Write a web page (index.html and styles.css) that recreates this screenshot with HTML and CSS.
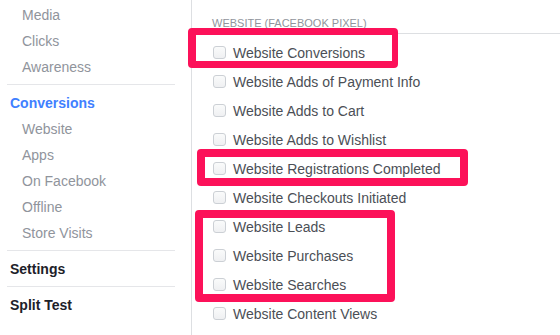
FILE: index.html
```html
<!DOCTYPE html>
<html>
<head>
<meta charset="utf-8">
<link rel="stylesheet" href="styles.css">
</head>
<body>
<div class="page">
  <aside class="sidebar">
    <div class="group">
      <div class="item sub">Media</div>
      <div class="item sub">Clicks</div>
      <div class="item sub">Awareness</div>
    </div>
    <div class="divider"></div>
    <div class="group">
      <div class="item head active">Conversions</div>
      <div class="item sub">Website</div>
      <div class="item sub">Apps</div>
      <div class="item sub">On Facebook</div>
      <div class="item sub">Offline</div>
      <div class="item sub">Store Visits</div>
    </div>
    <div class="divider"></div>
    <div class="item head">Settings</div>
    <div class="divider"></div>
    <div class="item head">Split Test</div>
  </aside>
  <main class="panel">
    <div class="section-title">WEBSITE (FACEBOOK PIXEL)</div>
    <ul class="list">
      <li class="row"><span class="check"></span>Website Conversions</li>
      <li class="row"><span class="check"></span>Website Adds of Payment Info</li>
      <li class="row"><span class="check"></span>Website Adds to Cart</li>
      <li class="row"><span class="check"></span>Website Adds to Wishlist</li>
      <li class="row"><span class="check"></span>Website Registrations Completed</li>
      <li class="row"><span class="check"></span>Website Checkouts Initiated</li>
      <li class="row"><span class="check"></span>Website Leads</li>
      <li class="row"><span class="check"></span>Website Purchases</li>
      <li class="row"><span class="check"></span>Website Searches</li>
      <li class="row"><span class="check"></span>Website Content Views</li>
    </ul>
  </main>
  <div class="mark mark-1"></div>
  <div class="mark mark-2"></div>
  <div class="mark mark-3"></div>
</div>
</body>
</html>
```

FILE: styles.css
```css
html, body {
  margin: 0;
  padding: 0;
  background: #ffffff;
}
body {
  font-family: "Liberation Sans", Arial, sans-serif;
  font-size: 14px;
  width: 560px;
  height: 335px;
  overflow: hidden;
}
.page {
  position: relative;
  display: flex;
  height: 335px;
}
.sidebar {
  width: 191px;
  flex: none;
  border-right: 1px solid #dddfe2;
  padding-top: 2px;
  box-sizing: content-box;
}
.item {
  height: 26px;
  line-height: 26px;
  white-space: nowrap;
}
.item.sub {
  padding-left: 22px;
  color: #90949c;
}
.item.head {
  padding-left: 10px;
  font-weight: bold;
  color: #1d2129;
}
.item.head.active {
  color: #4080ff;
}
.divider {
  height: 1px;
  background: #e5e6e9;
  margin: 4px 16px 5px 7px;
}
.panel {
  flex: 1;
  min-width: 0;
}
.section-title {
  font-size: 11px;
  line-height: 14px;
  color: #90949c;
  padding: 16px 0 3px 20px;
  margin-left: 8px;
  padding-left: 12px;
  border-bottom: 1px solid #dddfe2;
}
.list {
  list-style: none;
  margin: 0;
  padding: 4px 0 0 21px;
}
.row {
  height: 29px;
  display: flex;
  align-items: center;
  color: #4b4f56;
  white-space: nowrap;
}
.check {
  width: 11px;
  height: 11px;
  border: 1px solid #ccd0d5;
  border-radius: 3px;
  background: linear-gradient(#fafbfb, #eff0f2);
  margin-right: 7px;
  flex: none;
}
.mark {
  position: absolute;
  border: 8px solid #fc1159;
  border-radius: 4px;
  box-sizing: border-box;
}
.mark-1 {
  left: 188px;
  top: 28px;
  width: 210px;
  height: 40px;
  border-width: 7px 6px 7px 8px;
}
.mark-2 {
  left: 197px;
  top: 149px;
  width: 271px;
  height: 37px;
}
.mark-3 {
  left: 195px;
  top: 210px;
  width: 200px;
  height: 92px;
}
```
